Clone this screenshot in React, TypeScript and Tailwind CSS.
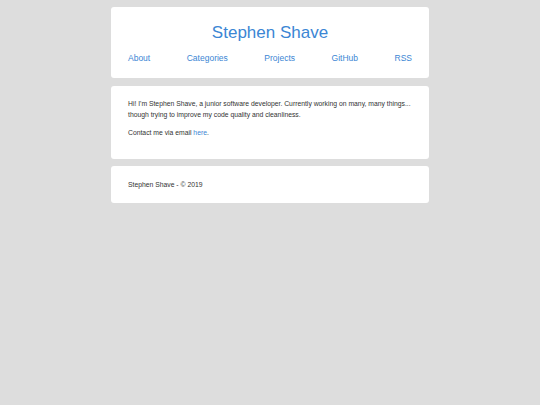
import React from 'react';

const links = ['About', 'Categories', 'Projects', 'GitHub', 'RSS'];

export default function App() {
  return (
    <div
      className="min-h-screen bg-[#dddddd] pt-[7px]"
      style={{ fontFamily: '"Liberation Sans", Arial, sans-serif' }}
    >
      <div className="mx-auto flex w-[318px] flex-col">
        {/* header */}
        <header className="rounded-[3px] bg-white px-[17px] pt-[15px] pb-[15px]">
          <h1 className="text-center text-[17px] leading-[22px] text-[#3b86d4]">
            <a href="#">Stephen Shave</a>
          </h1>
          <nav className="mt-[9px] flex justify-between text-[8.5px] leading-[10px] text-[#3b86d4]">
            {links.map(l => (
              <a key={l} href="#">
                {l}
              </a>
            ))}
          </nav>
        </header>

        {/* intro */}
        <main className="mt-[8px] rounded-[3px] bg-white px-[17px] pt-[12px] pb-[21px] text-[6.8px] leading-[11px] text-[#333333]">
          <p>
            Hi! I'm Stephen Shave, a junior software developer. Currently working on many, many things...
            though trying to improve my code quality and cleanliness.
          </p>
          <p className="mt-[7px]">
            Contact me via email{' '}
            <a href="#" className="text-[#3b86d4]">
              here
            </a>
            .
          </p>
        </main>

        {/* footer */}
        <footer className="mt-[7px] rounded-[3px] bg-white px-[17px] pt-[13px] pb-[13px] text-[6.8px] leading-[11px] text-[#333333]">
          Stephen Shave - © 2019
        </footer>
      </div>
    </div>
  );
}
